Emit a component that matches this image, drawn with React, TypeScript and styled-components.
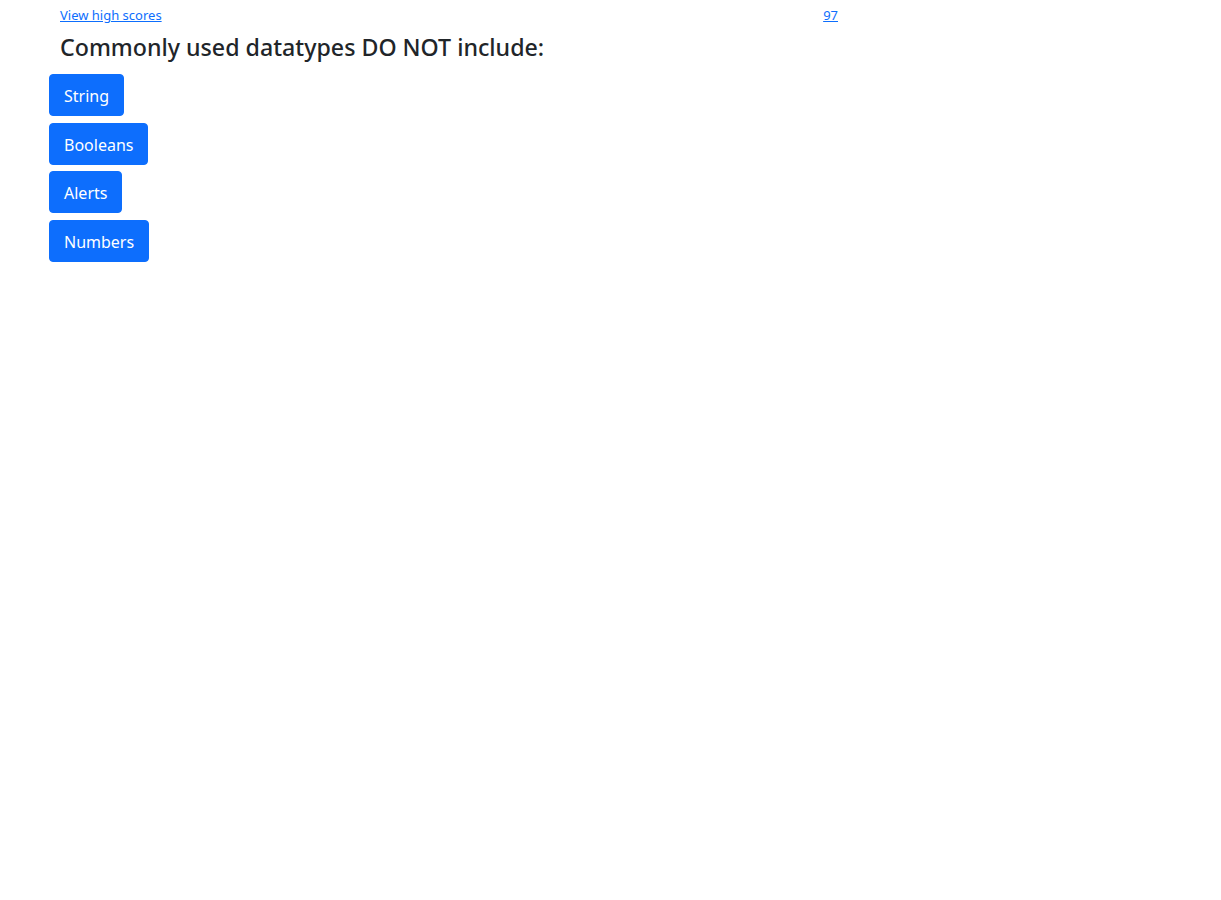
import React from 'react';
import styled, { createGlobalStyle } from 'styled-components';

const GlobalStyle = createGlobalStyle`
    body {
        margin: 0;
        background: #ffffff;
        font-family: "Noto Sans", "Open Sans", sans-serif;
        color: #212529;
    }
`;

const Page = styled.div`
    padding: 0 0 0 49px;
`;

const TopBar = styled.header`
    display: flex;
    justify-content: space-between;
    align-items: center;
    width: 789px;
    padding: 6px 0 0 11px;
    box-sizing: border-box;
`;

const TopLink = styled.a`
    font-size: 13px;
    color: #0d6efd;
    text-decoration: underline;
    line-height: 18px;
`;

const Question = styled.h2`
    margin: 8px 0 12px 11px;
    font-size: 23.2px;
    font-weight: 500;
    line-height: 30px;
    color: #212529;
`;

const Choices = styled.div`
    display: flex;
    flex-direction: column;
    align-items: flex-start;
    gap: 6.7px;
`;

const ChoiceButton = styled.button`
    font-family: "Noto Sans", "Open Sans", sans-serif;
    font-size: 16px;
    line-height: 26px;
    padding: 8px 14px 6px;
    border: 1px solid #0d6efd;
    background-color: #0d6efd;
    color: #ffffff;
    border-radius: 4px;
    cursor: pointer;
`;

const answers = ['String', 'Booleans', 'Alerts', 'Numbers'];

const App = () => {
    return (
        <>
            <GlobalStyle />
            <Page>
                <TopBar>
                    <TopLink href="#">View high scores</TopLink>
                    <TopLink href="#">97</TopLink>
                </TopBar>
                <Question>Commonly used datatypes DO NOT include:</Question>
                <Choices>
                    {answers.map(a => (
                        <ChoiceButton key={a}>{a}</ChoiceButton>
                    ))}
                </Choices>
            </Page>
        </>
    );
};

export default App;
